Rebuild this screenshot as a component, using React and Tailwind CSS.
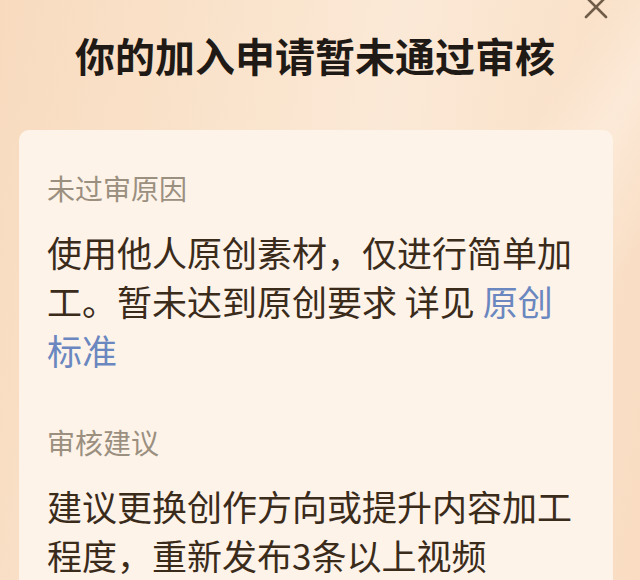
const Section = ({ label, children, className = "" }) => (
  <div className={className}>
    <div className="text-[28px] leading-[36px] text-[#9b8f80]">{label}</div>
    <p className="mt-[21px] text-[35px] leading-[49px] text-[#3a2b1b]">{children}</p>
  </div>
);

const App = () => {
  return (
    <div
      className="relative w-[640px] h-[580px] overflow-hidden bg-[linear-gradient(100deg,#f8dbbf_0%,#fae4cd_35%,#fbe9d7_55%,#fae3cc_75%,#f9dcc2_100%)]"
      style={{ fontFamily: '"Noto Sans CJK SC", "Noto Sans", sans-serif' }}
    >
      <div className="absolute inset-0 bg-[linear-gradient(120deg,transparent_62%,rgba(255,245,235,0.45)_70%,transparent_80%)]" />

      {/* close */}
      <svg
        className="absolute left-[584px] top-[-5px]"
        width="24"
        height="24"
        viewBox="0 0 24 24"
        fill="none"
        stroke="#6f5d4a"
        strokeWidth="2.6"
        strokeLinecap="round"
      >
        <path d="M2 2 L22 22 M22 2 L2 22" />
      </svg>

      <div className="relative">
        <h1 className="pt-[31px] text-center text-[40px] leading-[48px] font-bold text-[#1f1a15] pr-[10px]">
          你的加入申请暂未通过审核
        </h1>

        <div className="mt-[51px] ml-[19px] mr-[27px] h-[500px] rounded-[10px] bg-[#fdf3e9] px-[28px] pt-[40px]">
          <Section label="未过审原因">
            使用他人原创素材，仅进行简单加工。暂未达到原创要求 详见{" "}
            <span className="text-[#6a87bf]">原创</span>
            <span className="text-[#6a87bf]">标准</span>
          </Section>

          <Section label="审核建议" className="mt-[50px]">
            建议更换创作方向或提升内容加工程度，重新发布3条以上视频
          </Section>
        </div>
      </div>
    </div>
  );
};

export default App;
